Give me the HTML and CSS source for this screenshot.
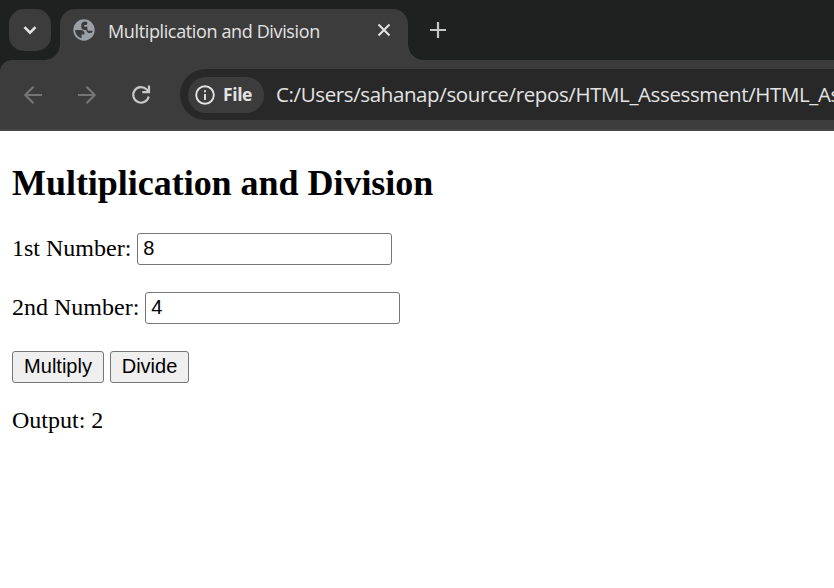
FILE: index.html
```html
<!DOCTYPE html>
<html lang="en">
<head>
<meta charset="utf-8">
<title>Multiplication and Division</title>
<link rel="stylesheet" href="styles.css">
</head>
<body>
<header class="browser">
  <div class="tabstrip">
    <div class="tab-search">
      <svg width="42" height="42" viewBox="0 0 42 42"><path d="M15.500 18.200l5.500 5.500 5.500-5.500" fill="none" stroke="#e3e3e3" stroke-width="2.600"/></svg>
    </div>
    <div class="tab">
      <svg class="globe" width="22" height="22" viewBox="0 0 22 22"><circle cx="11" cy="11" r="10.700" fill="#9aa0a6"/><path d="M2.200 11H7.500c2.500 0 4 1.300 4 3.200v1.300H8.600v3.700C4.800 18.300 2.200 15 2.200 11zM14.200 2.900V4.500c0 1-.7 1.600-1.700 1.600h-1.300v1.700h3.200v2.400c0 1 .6 1.500 1.600 1.500h3.600c0 1.300-1.100 2.400-2.700 2.400-2.200 0-3.500-1.200-3.700-3.100h-1.700c-2 0-3.200-1.300-3.200-3V6c0-2 1.500-3.400 3.500-3.400z" fill="#3c3c3c"/></svg>
      <span class="tab-title">Multiplication and Division</span>
      <svg class="close" width="14" height="14" viewBox="0 0 14 14"><path d="M1.500 1.500l11 11M12.500 1.500l-11 11" stroke="#e3e3e3" stroke-width="2"/></svg>
    </div>
    <svg class="new-tab" width="16" height="16" viewBox="0 0 16 16"><path d="M8 0v16M0 8h16" stroke="#c7c7c7" stroke-width="2.200"/></svg>
  </div>
  <div class="toolbar">
    <svg class="nav" width="20" height="20" viewBox="0 0 20 20"><path d="M19 10H2.500M10.500 1.800L2.300 10l8.200 8.200" fill="none" stroke="#757575" stroke-width="2.200"/></svg>
    <svg class="nav" width="20" height="20" viewBox="0 0 20 20"><path d="M1 10h16.500M9.500 1.800l8.200 8.200-8.200 8.200" fill="none" stroke="#757575" stroke-width="2.200"/></svg>
    <svg class="nav" width="20" height="20" viewBox="0 0 20 20"><path d="M17.700 11.500a7.800 7.800 0 1 1-2-7l2.300 2.300M18 .5v6.700h-6.700" fill="none" stroke="#c7c7c7" stroke-width="2.200"/></svg>
    <div class="omnibox">
      <div class="chip">
        <svg width="20" height="20" viewBox="0 0 20 20"><circle cx="10" cy="10" r="8.800" fill="none" stroke="#e3e3e3" stroke-width="1.900"/><path d="M10 9v6M10 5.300v2" stroke="#e3e3e3" stroke-width="1.900"/></svg>
        <span class="chip-label">File</span>
      </div>
      <span class="url">C:/Users/sahanap/source/repos/HTML_Assessment/HTML_Assessment</span>
    </div>
  </div>
</header>
<main class="page">
  <h2>Multiplication and Division</h2>
  <div class="row"><label for="n1">1st Number:</label><input id="n1" type="text" value="8"></div>
  <div class="row"><label for="n2">2nd Number:</label><input id="n2" type="text" value="4"></div>
  <div class="row"><button class="multiply">Multiply</button><button class="divide">Divide</button></div>
  <p>Output: 2</p>
</main>
</body>
</html>
```
FILE: styles.css
```css
* { box-sizing: border-box; }
body { margin: 0; width: 834px; height: 588px; overflow: hidden; background: #fff; }
svg { display: block; flex: none; }
.browser { height: 131px; background: #1f2120; font-family: "Open Sans", sans-serif; color: #e3e3e3; }
.tabstrip { display: flex; height: 60px; padding: 9px 0 0 9px; }
.tab-search { width: 42px; height: 42px; border-radius: 15px; background: #3c3c3c; }
.tab { position: relative; display: flex; align-items: center; width: 348px; height: 51px; margin-left: 9px; padding: 0 17px 9px 13px; border-radius: 15px 15px 0 0; background: #3c3c3c; }
.tab::before, .tab::after { content: ""; position: absolute; bottom: 0; width: 15px; height: 15px; }
.tab::before { left: -15px; background: radial-gradient(circle at 0 0, transparent 14.500px, #3c3c3c 15px); }
.tab::after { right: -15px; background: radial-gradient(circle at 100% 0, transparent 14.500px, #3c3c3c 15px); }
.tab-title { margin-left: 13px; padding-top: 1px; font-size: 18px; letter-spacing: -0.37px; white-space: nowrap; }
.close { margin-left: auto; }
.new-tab { margin: 13px 0 0 22px; }
.toolbar { display: flex; align-items: center; height: 71px; padding-left: 23px; border-radius: 12px 0 0 0; border-bottom: 2px solid #474747; background: #3c3c3c; }
.nav { margin-right: 34px; }
.omnibox { display: flex; align-items: center; flex: 1; min-width: 0; height: 51px; margin-left: -5px; padding-left: 8px; border-radius: 26px 0 0 26px; background: #282828; overflow: hidden; }
.chip { display: flex; flex: none; align-items: center; width: 76px; height: 36px; padding-left: 7px; border-radius: 18px; background: #3c3c3c; }
.chip-label { margin-left: 8px; padding-bottom: 2px; font-size: 17.5px; font-weight: 700; letter-spacing: -0.4px; }
.url { margin-left: 12px; padding-bottom: 2px; font-size: 20.5px; letter-spacing: -0.38px; white-space: nowrap; }
.page { padding: 31px 12px; font-family: "Liberation Serif", serif; font-size: 24px; color: #000; }
h2 { margin: 0 0 29px; font-size: 36px; line-height: 42px; letter-spacing: -0.03px; }
.row { display: flex; align-items: center; height: 32px; margin-bottom: 27px; }
label { margin-right: 6px; padding-bottom: 2px; line-height: 28px; white-space: nowrap; }
input, button { height: 32px; margin: 0; border: 1px solid #767676; border-radius: 3px; font-family: "Liberation Sans", sans-serif; font-size: 20px; color: #000; }
input { width: 255px; padding: 0 5px 2px; background: #fff; }
button { padding: 0 0 2px; background: #efefef; }
.multiply { width: 92px; }
.divide { width: 79px; margin-left: 6px; }
p { margin: -4px 0 0; line-height: 28px; }
```
